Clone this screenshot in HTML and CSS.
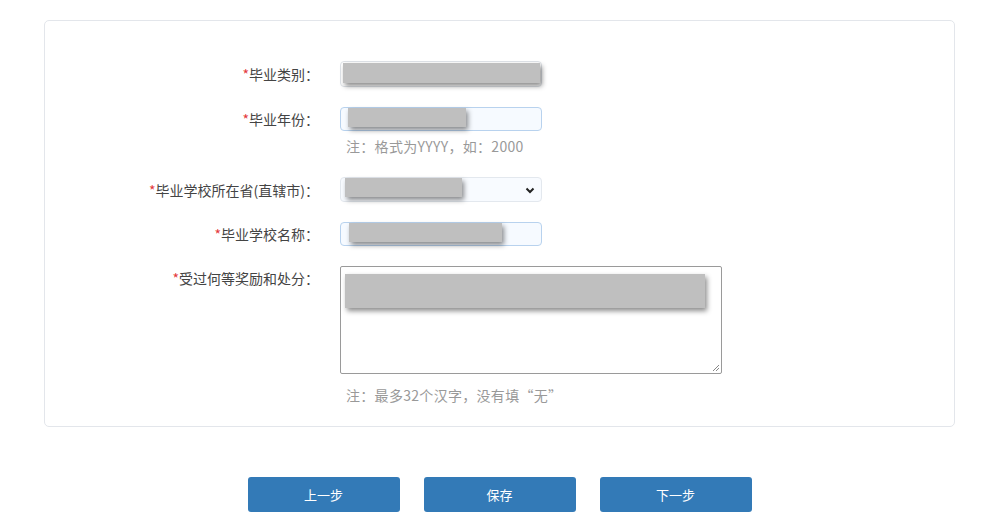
FILE: index.html
```html
<!DOCTYPE html>
<html lang="zh-CN">

<head>
    <meta charset="UTF-8">
    <title>毕业信息</title>
    <link rel="stylesheet" href="styles.css">
</head>

<body>
    <div id="page">
        <div class="panel">
            <div class="form-row">
                <label class="form-label"><span class="req">*</span>毕业类别：</label>
                <div class="field">
                    <div class="input input-plain"></div>
                    <div class="mask mask-1"></div>
                </div>
            </div>
            <div class="form-row">
                <label class="form-label"><span class="req">*</span>毕业年份：</label>
                <div class="field">
                    <div class="input input-filled"></div>
                    <div class="mask mask-2"></div>
                </div>
            </div>
            <p class="hint">注：格式为YYYY，如：2000</p>
            <div class="form-row">
                <label class="form-label"><span class="req">*</span>毕业学校所在省(直辖市)：</label>
                <div class="field">
                    <div class="input input-select">
                        <svg class="chevron" width="10" height="7" viewBox="0 0 10 7">
                            <path d="M1.5 1.5 L5 5 L8.5 1.5" fill="none" stroke="#222" stroke-width="2" />
                        </svg>
                    </div>
                    <div class="mask mask-3"></div>
                </div>
            </div>
            <div class="form-row">
                <label class="form-label"><span class="req">*</span>毕业学校名称：</label>
                <div class="field">
                    <div class="input input-filled"></div>
                    <div class="mask mask-4"></div>
                </div>
            </div>
            <div class="form-row row-top">
                <label class="form-label"><span class="req">*</span>受过何等奖励和处分：</label>
                <div class="field">
                    <div class="textarea">
                        <svg class="grip" width="8" height="8" viewBox="0 0 8 8">
                            <path d="M7 1 L1 7 M7 4 L4 7" stroke="#888" stroke-width="1" />
                        </svg>
                    </div>
                    <div class="mask mask-5"></div>
                </div>
            </div>
            <p class="hint hint-last">注：最多32个汉字，没有填“无”</p>
        </div>

        <div class="actions">
            <button class="btn">上一步</button>
            <button class="btn">保存</button>
            <button class="btn">下一步</button>
        </div>
    </div>
</body>

</html>
```

FILE: styles.css
```css
body {
    margin: 0;
    background: #fff;
    font-family: "Noto Sans CJK SC", "Noto Sans", sans-serif;
    font-size: 14px;
    color: #444;
}

#page {
    padding: 20px 43px 0 44px;
}

.panel {
    border: 1px solid #e3e6eb;
    border-radius: 5px;
    padding: 40px 0 22px 0;
}

.form-row {
    display: flex;
    align-items: center;
    margin-bottom: 20px;
}

.row-top {
    align-items: flex-start;
    margin-bottom: 0;
}

.form-label {
    width: 274px;
    padding-right: 21px;
    text-align: right;
    line-height: 24px;
    white-space: nowrap;
}

.req {
    color: #e4393c;
}

.field {
    position: relative;
}

.input {
    box-sizing: border-box;
    width: 202px;
    height: 26px;
    border: 1px solid #dfe3e8;
    border-radius: 4px;
    background: #fff;
}

.input-filled {
    height: 24px;
    border-color: #b8d2ee;
    background: #f6faff;
}

.input-select {
    position: relative;
    height: 25px;
    border-color: #e3e8ee;
    background: #f8fbff;
}

.chevron {
    position: absolute;
    right: 6px;
    top: 9px;
}

.textarea {
    position: relative;
    box-sizing: border-box;
    width: 382px;
    height: 108px;
    border: 1px solid #9a9a9a;
    border-radius: 2px;
    background: #fff;
}

.grip {
    position: absolute;
    right: 1px;
    bottom: 1px;
}

/* 打码用的灰块 */
.mask {
    position: absolute;
    background: #bfbfbf;
    box-shadow: 2px 3px 5px rgba(0, 0, 0, 0.45);
}

.mask-1 {
    left: 3px;
    top: 2px;
    width: 197px;
    height: 20px;
}

.mask-2 {
    left: 8px;
    top: 1px;
    width: 118px;
    height: 19px;
}

.mask-3 {
    left: 5px;
    top: 1px;
    width: 117px;
    height: 19px;
}

.mask-4 {
    left: 9px;
    top: 1px;
    width: 153px;
    height: 19px;
}

.mask-5 {
    left: 5px;
    top: 8px;
    width: 360px;
    height: 34px;
}

.hint {
    margin: -14px 0 22px 0;
    padding-left: 301px;
    color: #999;
    line-height: 18px;
    letter-spacing: 0.3px;
}

.hint-last {
    margin: 12px 0 0 0;
}

.actions {
    display: flex;
    justify-content: center;
    gap: 24px;
    margin-top: 50px;
}

.btn {
    width: 152px;
    height: 35px;
    border: none;
    border-radius: 3px;
    background: #337ab7;
    color: #fff;
    font-family: "Noto Sans CJK SC", "Noto Sans", sans-serif;
    font-size: 13px;
}
```
